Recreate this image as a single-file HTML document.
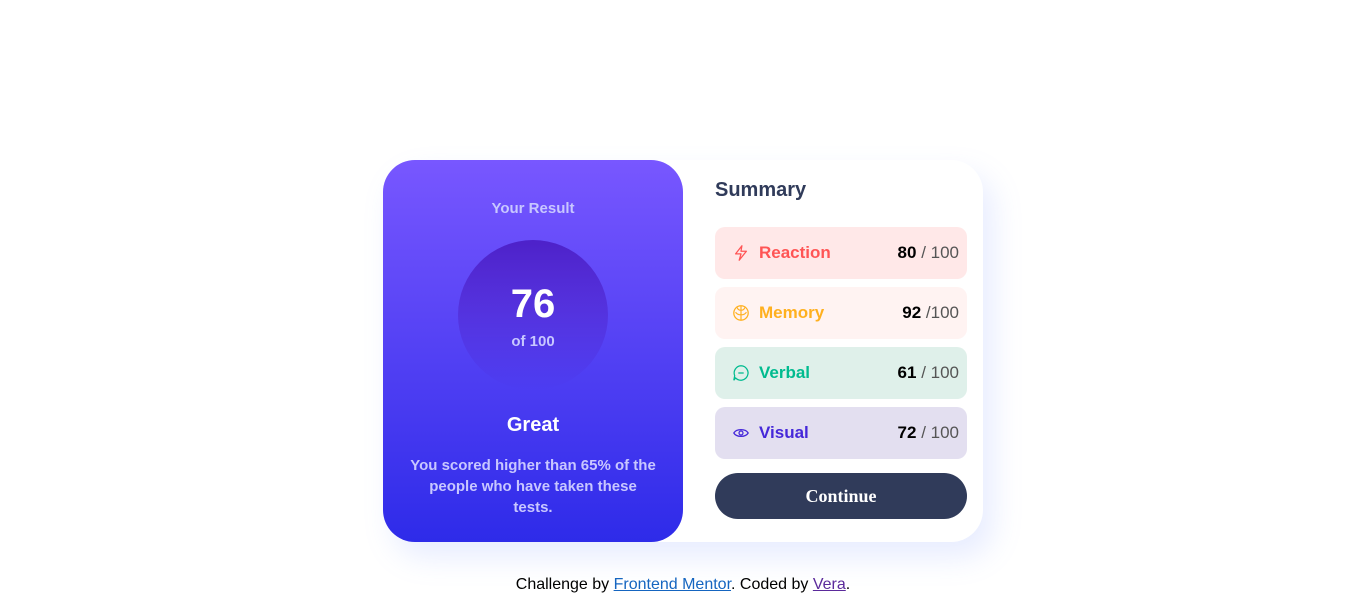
<!DOCTYPE html>
<html><head><meta charset="utf-8"><style>
*{box-sizing:border-box;margin:0;padding:0}
body{width:1366px;height:597px;background:#fff;font-family:"Liberation Sans",sans-serif;position:relative;overflow:hidden}
.card{position:absolute;left:383px;top:160px;width:600px;height:382px;background:#fff;border-radius:32px;box-shadow:10px 15px 30px rgba(120,150,255,0.18)}
.left{position:absolute;left:0;top:0;width:300px;height:382px;border-radius:32px;background:linear-gradient(#7857ff,#2e2be9);color:#fff;text-align:center}
.yr{position:absolute;top:40px;width:100%;font-size:15px;font-weight:bold;color:#c8c7ff}
.circ{position:absolute;left:75px;top:80px;width:150px;height:150px;border-radius:50%;background:linear-gradient(#4d21c9,rgba(37,33,201,0) 100%);}
.n76{position:absolute;top:42px;width:100%;font-size:40px;font-weight:bold}
.of{position:absolute;top:93px;width:100%;font-size:15px;font-weight:bold;color:#c8c7ff}
.great{position:absolute;top:254px;width:100%;font-size:20px;font-weight:bold}
.desc{position:absolute;top:295px;left:20px;width:260px;font-size:15px;line-height:21px;font-weight:bold;color:#c8c7ff;white-space:nowrap}
.sum{position:absolute;left:332px;top:19px;font-size:20px;font-weight:bold;color:#303b5a}
.row{position:absolute;left:332px;width:252px;height:52px;border-radius:10px;font-size:17px;font-weight:bold}
.row svg{position:absolute;left:17px;top:17px}
.row .lab{position:absolute;left:44px;top:16px}
.row .sc{position:absolute;right:8px;top:16px;color:#000}
.row .sc span{font-weight:normal;color:#555}
.btn{position:absolute;left:332px;top:313px;width:252px;height:46px;border-radius:23px;background:#303b5a;color:#fff;font-family:"Liberation Serif",serif;font-weight:bold;font-size:18px;text-align:center;line-height:46px}
.foot{position:absolute;top:576px;width:100%;text-align:center;font-size:16px;color:#000}
.foot a{color:#1565c0}.foot a.v{color:#5b2a9b}
</style></head><body>
<div class="card">
 <div class="left">
  <div class="yr">Your Result</div>
  <div class="circ"><div class="n76">76</div><div class="of">of 100</div></div>
  <div class="great">Great</div>
  <div class="desc">You scored higher than 65% of the<br>people who have taken these<br>tests.</div>
 </div>
 <div class="sum">Summary</div>
 <div class="row" style="top:67px;background:#ffe8e8;color:#ff5555">
  <svg width="18" height="18" viewBox="0 0 20 20"><path d="M11 2 L4 11 H10 L8 18 L16 8 H10 Z" fill="none" stroke="#ff5555" stroke-width="1.4" stroke-linejoin="round"/></svg>
  <div class="lab">Reaction</div><div class="sc">80 <span>/ 100</span></div></div>
 <div class="row" style="top:127px;background:#fff3f2;color:#ffb01f">
  <svg width="18" height="18" viewBox="0 0 20 20"><circle cx="10" cy="10" r="8" fill="none" stroke="#ffb01f" stroke-width="1.4"/><path d="M10 2V18M10 7C7 7 6 5 6 4M10 12C7 12 5 11 4 9M10 7C13 7 14 5 14 4M10 12C13 12 15 11 16 9" fill="none" stroke="#ffb01f" stroke-width="1.3"/></svg>
  <div class="lab">Memory</div><div class="sc">92 <span>/100</span></div></div>
 <div class="row" style="top:187px;background:#dff0ea;color:#00bb8f">
  <svg width="18" height="18" viewBox="0 0 20 20"><path d="M10 2A8 8 0 1 1 4 15.5L2 18L3 13A8 8 0 0 1 10 2Z" fill="none" stroke="#00bb8f" stroke-width="1.4"/><path d="M7 10H13" stroke="#00bb8f" stroke-width="1.4"/></svg>
  <div class="lab">Verbal</div><div class="sc">61 <span>/ 100</span></div></div>
 <div class="row" style="top:247px;background:#e3dff0;color:#4528d9">
  <svg width="18" height="18" viewBox="0 0 20 20"><path d="M2 10C5 5 15 5 18 10C15 15 5 15 2 10Z" fill="none" stroke="#4528d9" stroke-width="1.4"/><circle cx="10" cy="10" r="2.2" fill="none" stroke="#4528d9" stroke-width="1.4"/></svg>
  <div class="lab">Visual</div><div class="sc">72 <span>/ 100</span></div></div>
 <div class="btn">Continue</div>
</div>
<div class="foot">Challenge by <a href="#">Frontend Mentor</a>. Coded by <a class="v" href="#">Vera</a>.</div>
</body></html>
